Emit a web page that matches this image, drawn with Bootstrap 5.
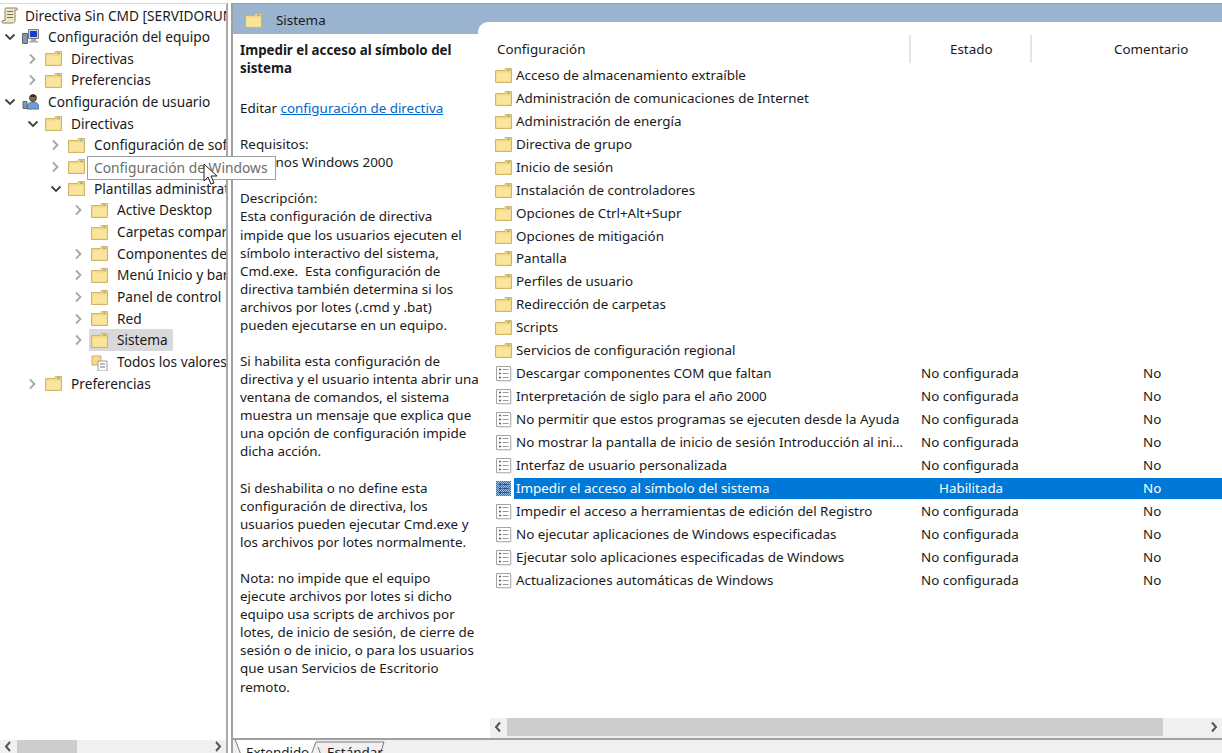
<!DOCTYPE html>
<html lang="es">
<head>
    <meta charset="UTF-8">
    <title>Directiva Sin CMD</title>
    <link rel="stylesheet" href="https://cdn.jsdelivr.net/npm/bootstrap@5.3.0/dist/css/bootstrap.min.css">
    <style>
        html, body { height: 100%; overflow: hidden; }
        body { font-family: "Noto Sans", "Liberation Sans", sans-serif; font-size: 13.4px; color: #1a1a1a; background: #fff; line-height: 18px; }
        .shell { height: 753px; padding-top: 3px; }
        .tree-side { width: 228px; border-right: 2px solid #a9a9a9; border-top: 1px solid #d9d9d9; font-size: 13.7px; }
        .tree-view { flex: 1; overflow: hidden; padding-top: 1px; }
        .tree-row { height: 21.7px; white-space: nowrap; }
        .tree-row.lv0 { padding-left: 1px; height: 21px; }
        .tree-row.lv0 .ico { margin-right: 7px; }
        .tree-row.lv1 { padding-left: 3px; }
        .tree-row.lv2 { padding-left: 26px; }
        .tree-row.lv3 { padding-left: 49px; }
        .tree-row.lv4 { padding-left: 72px; }
        .tw { width: 14px; height: 12px; flex: none; margin-right: 5px; }
        .ico { width: 17px; height: 17px; flex: none; margin-right: 9px; }
        .cur { background: #d9d9d9; padding: 0 5px 0 2px; margin-left: -2px; height: 22px; }
        .hscroll { height: 13px; background: #f0f0f0; flex: none; }
        .hscroll .arrow { width: 17px; height: 13px; flex: none; }
        .thumb-left { width: 60px; background: #cdcdcd; }
        .tip { position: absolute; left: 87px; top: 156px; width: 189px; height: 24px; line-height: 22px; border: 1px solid #a0a0a0; background: #fff; color: #6d6d6d; font-size: 13.8px; padding-left: 6px; white-space: nowrap; z-index: 5; }
        .pointer { position: absolute; left: 203px; top: 163px; z-index: 6; }
        .main-side { margin-left: 3px; border-left: 2px solid #a0a0a0; border-top: 1px solid #a0a0a0; flex: 1; min-width: 0; }
        .panes { flex: 1; min-height: 0; background: #9ab3cf; }
        .desc-col { width: 245px; flex: none; }
        .title-band { height: 30px; flex: none; padding-left: 12px; padding-top: 2px; }
        .title-band .ico { margin-right: 14px; }
        .desc-pane { background: #fff; padding: 7px 0 0 7px; white-space: nowrap; line-height: 18.08px; }
        .desc-pane h2 { font-size: 13.3px; font-weight: 700; line-height: 18px; margin: 0 0 22px; }
        .desc-pane p { margin: 0 0 18.08px; }
        .desc-pane a { color: #0066cc; }
        .list-pane { flex: 1; min-width: 0; background: #fff; border-top-left-radius: 10px; margin-top: 18px; display: flex; flex-direction: column; }
        .list-head { height: 28px; margin-top: 13px; flex: none; line-height: 28px; }
        .hd-name { width: 433px; padding-left: 19px; border-right: 2px solid #e5e5e5; }
        .hd-state { width: 121px; padding-left: 39px; border-right: 2px solid #e5e5e5; }
        .hd-note { padding-left: 82px; }
        .list-body { flex: 1; min-height: 0; padding-top: 1px; padding-left: 17px; }
        .pol-row { height: 22.95px; white-space: nowrap; }
        .pol-row .ico { margin-right: 2px; }
        .pol-name { width: 407px; padding-left: 2px; overflow: hidden; }
        .pol-state { width: 222px; }
        .pol-row.sel .pol-cells { background: #0078d7; color: #fff; }
        .pol-cells { flex: 1; height: 21px; line-height: 21px; display: flex; }
        .pol-row.sel .pol-state { padding-left: 18px; }
        .list-scroll { height: 20px; padding-bottom: 2px; background: #f0f0f0; flex: none; margin-left: 12px; }
        .list-scroll .arrow { width: 17px; height: 18px; flex: none; }
        .thumb-main { width: 656px; background: #cdcdcd; }
        .tab-strip { height: 15px; flex: none; background: #f0f0f0; border-top: 2px solid #a0a0a0; position: relative; overflow: hidden; }
        .tab-shape { position: absolute; left: 0; top: -1px; }
        .tab-text { position: absolute; top: 3px; white-space: nowrap; }
    </style>
</head>
<body>

<svg width="0" height="0" class="position-absolute">
    <symbol id="folder" viewBox="0 0 17 17">
        <path d="M.5 3.5h9l1-2h6v14H.5z" fill="#f4d77f" stroke="#d2b467"/>
        <path d="M1.5 5.5h14v9h-14z" fill="#fae59f"/>
        <path d="M1.5 4.5h9l1-2h4v2z" fill="#f1d27a"/>
        <path d="M12 2.5h3v1.500h-3z" fill="#7fb2d9"/>
    </symbol>
    <symbol id="policy" viewBox="0 0 17 17">
        <path d="M1.500 1.500h14v14h-14z" fill="#fff" stroke="#a3a3a3"/>
        <path d="M16 3v13H3" fill="none" stroke="#cfcfcf"/>
        <path d="M4 4.500h2M4 8.500h2M4 12.500h2" stroke="#5a5a5a" stroke-width="1.500"/>
        <path d="M7.500 4.500h6M7.500 8.500h6M7.500 12.500h6" stroke="#9a9a9a"/>
    </symbol>
    <pattern id="dither" width="2" height="2" patternUnits="userSpaceOnUse">
        <path d="M0 0h2v2H0z" fill="#9cc0e6"/>
        <path d="M0 0h1v1H0zM1 1h1v1H1z" fill="#2a6fbf"/>
    </pattern>
    <symbol id="policy-sel" viewBox="0 0 17 17">
        <path d="M1 1h15v15H1z" fill="url(#dither)"/>
        <path d="M4 4.500h2M4 8.500h2M4 12.500h2" stroke="#123f7a" stroke-width="1.500"/>
        <path d="M7.500 4.500h6M7.500 8.500h6M7.500 12.500h6" stroke="#1c4f8f"/>
    </symbol>
    <symbol id="closed" viewBox="0 0 14 12"><path d="M4 1.500 8.500 6 4 10.500" fill="none" stroke="#a6a6a6" stroke-width="1.800"/></symbol>
    <symbol id="opened" viewBox="0 0 14 12"><path d="M2.500 3.500 7 8l4.500-4.500" fill="none" stroke="#404040" stroke-width="1.800"/></symbol>
</svg>

<div class="shell d-flex">
    <!-- Arbol -->
    <div class="tree-side d-flex flex-column">
        <div class="tree-view">
            <div class="tree-row lv0 d-flex align-items-center">
                <svg class="ico" viewBox="0 0 17 17"><path d="M5 1h10c1.500 0 2 1 1 2h-2v10c0 2-1 3-2.500 3H2c-1.500 0-1.500-2-.5-2.500H4V2.500C4 1.500 4.500 1 5 1z" fill="#efe6c8" stroke="#8a8163"/><path d="M6 4.500h6M6 7.500h6M6 10.500h6" stroke="#77705a"/></svg>
                <span>Directiva Sin CMD [SERVIDORUNO]</span>
            </div>
            <div class="tree-row lv1 d-flex align-items-center">
                <svg class="tw"><use href="#opened"/></svg>
                <svg class="ico" viewBox="0 0 17 17"><path d="M6.500 1.500h10v9h-10z" fill="#d6d6d6" stroke="#7d7d7d"/><path d="M8 3h7v6H8z" fill="#1741c9"/><path d="M9 11h5v2H9zM7 13h9v1.500H7z" fill="#a8a8a8"/><path d="M.500 5.500h5v10h-5z" fill="#8796a8" stroke="#5b6672"/></svg>
                <span>Configuración del equipo</span>
            </div>
            <div class="tree-row lv2 d-flex align-items-center"><svg class="tw"><use href="#closed"/></svg><svg class="ico"><use href="#folder"/></svg><span>Directivas</span></div>
            <div class="tree-row lv2 d-flex align-items-center"><svg class="tw"><use href="#closed"/></svg><svg class="ico"><use href="#folder"/></svg><span>Preferencias</span></div>
            <div class="tree-row lv1 d-flex align-items-center">
                <svg class="tw"><use href="#opened"/></svg>
                <svg class="ico" viewBox="0 0 17 17"><path d="M5 16c0-5 2-7 6-7s6 2 6 7z" fill="#6f9fce" stroke="#49719b"/><circle cx="11" cy="5" r="3.400" fill="#8a6648" stroke="#4f3a2a"/><path d="M7.500 4c1-3 6-3 7 0z" fill="#3c3026"/><path d="M1 8.500h4v7H1z" fill="#8796a8" stroke="#5b6672"/></svg>
                <span>Configuración de usuario</span>
            </div>
            <div class="tree-row lv2 d-flex align-items-center"><svg class="tw"><use href="#opened"/></svg><svg class="ico"><use href="#folder"/></svg><span>Directivas</span></div>
            <div class="tree-row lv3 d-flex align-items-center"><svg class="tw"><use href="#closed"/></svg><svg class="ico"><use href="#folder"/></svg><span>Configuración de software</span></div>
            <div class="tree-row lv3 d-flex align-items-center"><svg class="tw"><use href="#closed"/></svg><svg class="ico"><use href="#folder"/></svg><span>Configuración de Windows</span></div>
            <div class="tree-row lv3 d-flex align-items-center"><svg class="tw"><use href="#opened"/></svg><svg class="ico"><use href="#folder"/></svg><span>Plantillas administrativas</span></div>
            <div class="tree-row lv4 d-flex align-items-center"><svg class="tw"><use href="#closed"/></svg><svg class="ico"><use href="#folder"/></svg><span>Active Desktop</span></div>
            <div class="tree-row lv4 d-flex align-items-center"><span class="tw"></span><svg class="ico"><use href="#folder"/></svg><span>Carpetas compartidas</span></div>
            <div class="tree-row lv4 d-flex align-items-center"><svg class="tw"><use href="#closed"/></svg><svg class="ico"><use href="#folder"/></svg><span>Componentes de Windows</span></div>
            <div class="tree-row lv4 d-flex align-items-center"><svg class="tw"><use href="#closed"/></svg><svg class="ico"><use href="#folder"/></svg><span>Menú Inicio y barra de tareas</span></div>
            <div class="tree-row lv4 d-flex align-items-center"><svg class="tw"><use href="#closed"/></svg><svg class="ico"><use href="#folder"/></svg><span>Panel de control</span></div>
            <div class="tree-row lv4 d-flex align-items-center"><svg class="tw"><use href="#closed"/></svg><svg class="ico"><use href="#folder"/></svg><span>Red</span></div>
            <div class="tree-row lv4 d-flex align-items-center"><svg class="tw"><use href="#closed"/></svg><span class="cur d-flex align-items-center"><svg class="ico"><use href="#folder"/></svg><span>Sistema</span></span></div>
            <div class="tree-row lv4 d-flex align-items-center"><span class="tw"></span>
                <svg class="ico" viewBox="0 0 17 17"><path d="M1 2h9v9H1z" fill="#f6dc90" stroke="#cfb266"/><path d="M7 7h9v10H7z" fill="#fff" stroke="#9b9b9b"/><path d="M9 10h5M9 13h5" stroke="#777"/></svg>
                <span>Todos los valores</span>
            </div>
            <div class="tree-row lv2 d-flex align-items-center"><svg class="tw"><use href="#closed"/></svg><svg class="ico"><use href="#folder"/></svg><span>Preferencias</span></div>
        </div>
        <div class="hscroll d-flex">
            <svg class="arrow" viewBox="0 0 17 13"><path d="M10 2 6 6.500l4 4.500" fill="none" stroke="#555" stroke-width="2"/></svg>
            <div class="thumb-left"></div>
            <div class="flex-grow-1"></div>
            <svg class="arrow" viewBox="0 0 17 13"><path d="M7 2l4 4.500L7 11" fill="none" stroke="#555" stroke-width="2"/></svg>
        </div>
    </div>

    <!-- Panel derecho -->
    <div class="main-side d-flex flex-column">
        <div class="panes d-flex flex-grow-1">
            <div class="desc-col d-flex flex-column">
                <div class="title-band d-flex align-items-center">
                    <svg class="ico"><use href="#folder"/></svg><span>Sistema</span>
                </div>
                <div class="desc-pane flex-grow-1">
                    <h2>Impedir el acceso al símbolo del<br>sistema</h2>
                    <p>Editar <a href="#">configuración de directiva</a></p>
                    <p>Requisitos:<br>Al menos Windows 2000</p>
                    <p>Descripción:<br>Esta configuración de directiva<br>impide que los usuarios ejecuten el<br>símbolo interactivo del sistema,<br>Cmd.exe.&nbsp; Esta configuración de<br>directiva también determina si los<br>archivos por lotes (.cmd y .bat)<br>pueden ejecutarse en un equipo.</p>
                    <p>Si habilita esta configuración de<br>directiva y el usuario intenta abrir una<br>ventana de comandos, el sistema<br>muestra un mensaje que explica que<br>una opción de configuración impide<br>dicha acción.</p>
                    <p>Si deshabilita o no define esta<br>configuración de directiva, los<br>usuarios pueden ejecutar Cmd.exe y<br>los archivos por lotes normalmente.</p>
                    <p>Nota: no impide que el equipo<br>ejecute archivos por lotes si dicho<br>equipo usa scripts de archivos por<br>lotes, de inicio de sesión, de cierre de<br>sesión o de inicio, o para los usuarios<br>que usan Servicios de Escritorio<br>remoto.</p>
                </div>
            </div>
            <div class="list-pane">
                <div class="list-head d-flex">
                    <div class="hd-name">Configuración</div>
                    <div class="hd-state">Estado</div>
                    <div class="hd-note">Comentario</div>
                </div>
                <div class="list-body">
                    <div class="pol-row d-flex align-items-center"><svg class="ico"><use href="#folder"/></svg><div class="pol-cells"><div class="pol-name">Acceso de almacenamiento extraíble</div></div></div>
                    <div class="pol-row d-flex align-items-center"><svg class="ico"><use href="#folder"/></svg><div class="pol-cells"><div class="pol-name">Administración de comunicaciones de Internet</div></div></div>
                    <div class="pol-row d-flex align-items-center"><svg class="ico"><use href="#folder"/></svg><div class="pol-cells"><div class="pol-name">Administración de energía</div></div></div>
                    <div class="pol-row d-flex align-items-center"><svg class="ico"><use href="#folder"/></svg><div class="pol-cells"><div class="pol-name">Directiva de grupo</div></div></div>
                    <div class="pol-row d-flex align-items-center"><svg class="ico"><use href="#folder"/></svg><div class="pol-cells"><div class="pol-name">Inicio de sesión</div></div></div>
                    <div class="pol-row d-flex align-items-center"><svg class="ico"><use href="#folder"/></svg><div class="pol-cells"><div class="pol-name">Instalación de controladores</div></div></div>
                    <div class="pol-row d-flex align-items-center"><svg class="ico"><use href="#folder"/></svg><div class="pol-cells"><div class="pol-name">Opciones de Ctrl+Alt+Supr</div></div></div>
                    <div class="pol-row d-flex align-items-center"><svg class="ico"><use href="#folder"/></svg><div class="pol-cells"><div class="pol-name">Opciones de mitigación</div></div></div>
                    <div class="pol-row d-flex align-items-center"><svg class="ico"><use href="#folder"/></svg><div class="pol-cells"><div class="pol-name">Pantalla</div></div></div>
                    <div class="pol-row d-flex align-items-center"><svg class="ico"><use href="#folder"/></svg><div class="pol-cells"><div class="pol-name">Perfiles de usuario</div></div></div>
                    <div class="pol-row d-flex align-items-center"><svg class="ico"><use href="#folder"/></svg><div class="pol-cells"><div class="pol-name">Redirección de carpetas</div></div></div>
                    <div class="pol-row d-flex align-items-center"><svg class="ico"><use href="#folder"/></svg><div class="pol-cells"><div class="pol-name">Scripts</div></div></div>
                    <div class="pol-row d-flex align-items-center"><svg class="ico"><use href="#folder"/></svg><div class="pol-cells"><div class="pol-name">Servicios de configuración regional</div></div></div>
                    <div class="pol-row d-flex align-items-center"><svg class="ico"><use href="#policy"/></svg><div class="pol-cells"><div class="pol-name">Descargar componentes COM que faltan</div><div class="pol-state">No configurada</div><div>No</div></div></div>
                    <div class="pol-row d-flex align-items-center"><svg class="ico"><use href="#policy"/></svg><div class="pol-cells"><div class="pol-name">Interpretación de siglo para el año 2000</div><div class="pol-state">No configurada</div><div>No</div></div></div>
                    <div class="pol-row d-flex align-items-center"><svg class="ico"><use href="#policy"/></svg><div class="pol-cells"><div class="pol-name">No permitir que estos programas se ejecuten desde la Ayuda</div><div class="pol-state">No configurada</div><div>No</div></div></div>
                    <div class="pol-row d-flex align-items-center"><svg class="ico"><use href="#policy"/></svg><div class="pol-cells"><div class="pol-name">No mostrar la pantalla de inicio de sesión Introducción al ini...</div><div class="pol-state">No configurada</div><div>No</div></div></div>
                    <div class="pol-row d-flex align-items-center"><svg class="ico"><use href="#policy"/></svg><div class="pol-cells"><div class="pol-name">Interfaz de usuario personalizada</div><div class="pol-state">No configurada</div><div>No</div></div></div>
                    <div class="pol-row sel d-flex align-items-center"><svg class="ico"><use href="#policy-sel"/></svg><div class="pol-cells"><div class="pol-name">Impedir el acceso al símbolo del sistema</div><div class="pol-state">Habilitada</div><div>No</div></div></div>
                    <div class="pol-row d-flex align-items-center"><svg class="ico"><use href="#policy"/></svg><div class="pol-cells"><div class="pol-name">Impedir el acceso a herramientas de edición del Registro</div><div class="pol-state">No configurada</div><div>No</div></div></div>
                    <div class="pol-row d-flex align-items-center"><svg class="ico"><use href="#policy"/></svg><div class="pol-cells"><div class="pol-name">No ejecutar aplicaciones de Windows especificadas</div><div class="pol-state">No configurada</div><div>No</div></div></div>
                    <div class="pol-row d-flex align-items-center"><svg class="ico"><use href="#policy"/></svg><div class="pol-cells"><div class="pol-name">Ejecutar solo aplicaciones especificadas de Windows</div><div class="pol-state">No configurada</div><div>No</div></div></div>
                    <div class="pol-row d-flex align-items-center"><svg class="ico"><use href="#policy"/></svg><div class="pol-cells"><div class="pol-name">Actualizaciones automáticas de Windows</div><div class="pol-state">No configurada</div><div>No</div></div></div>
                </div>
                <div class="list-scroll d-flex">
                    <svg class="arrow" viewBox="0 0 17 18"><path d="M10 4.500 6 9l4 4.500" fill="none" stroke="#555" stroke-width="2"/></svg>
                    <div class="thumb-main"></div>
                    <div class="flex-grow-1"></div>
                    <svg class="arrow" viewBox="0 0 17 18"><path d="M7 4.500 11 9l-4 4.500" fill="none" stroke="#555" stroke-width="2"/></svg>
                </div>
            </div>
        </div>
        <div class="tab-strip">
            <svg class="tab-shape" width="170" height="16" viewBox="0 0 170 16">
                <path d="M2 0l6 16h70l5-16z" fill="#fff"/>
                <path d="M2 0l6 16M78 16l5-13M83 3h68l-4 13M88 16l-3-8" fill="none" stroke="#7a7a7a"/>
            </svg>
            <span class="tab-text" style="left:13px">Extendido</span>
            <span class="tab-text" style="left:94px">Estándar</span>
        </div>
    </div>
</div>

<!-- Tooltip del arbol -->
<div class="tip">Configuración de Windows</div>
<svg class="pointer" width="17" height="24" viewBox="0 0 17 24"><path d="M1 1v17l4-4 3 7 3-1-3-7h6z" fill="#fff" stroke="#222"/></svg>

<script src="https://cdn.jsdelivr.net/npm/bootstrap@5.3.0/dist/js/bootstrap.bundle.min.js"></script>
</body>
</html>
